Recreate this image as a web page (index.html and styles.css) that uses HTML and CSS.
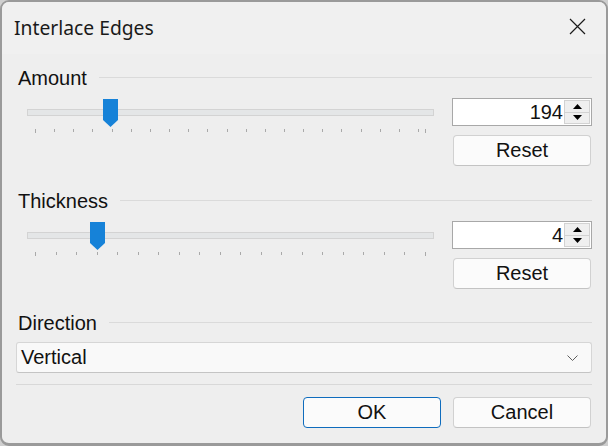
FILE: index.html
```html
<!DOCTYPE html>
<html>
<head>
<meta charset="utf-8">
<link rel="stylesheet" href="styles.css">
</head>
<body>
<div class="window">
  <div class="titlebar">
    <span class="title">Interlace Edges</span>
    <span class="close">
      <svg width="17" height="17" viewBox="0 0 17 17"><path d="M1 1 L16 16 M16 1 L1 16" stroke="#1b1b1b" stroke-width="1.2" fill="none"/></svg>
    </span>
  </div>
  <div class="content">
    <section class="group first">
      <div class="group-head"><span class="label">Amount</span><span class="rule"></span></div>
      <div class="control-row">
        <div class="slider">
          <div class="track"></div>
          <div class="ticks">
            <i class="tick long" style="left:19px"></i><i class="tick" style="left:38.15px"></i><i class="tick" style="left:57.3px"></i><i class="tick" style="left:76.45px"></i><i class="tick" style="left:95.6px"></i><i class="tick" style="left:114.75px"></i><i class="tick" style="left:133.9px"></i><i class="tick" style="left:153.05px"></i><i class="tick" style="left:172.2px"></i><i class="tick" style="left:191.35px"></i><i class="tick" style="left:210.5px"></i><i class="tick" style="left:229.65px"></i><i class="tick" style="left:248.8px"></i><i class="tick" style="left:267.95px"></i><i class="tick" style="left:287.1px"></i><i class="tick" style="left:306.25px"></i><i class="tick" style="left:325.4px"></i><i class="tick" style="left:344.55px"></i><i class="tick" style="left:363.7px"></i><i class="tick" style="left:382.85px"></i><i class="tick" style="left:402px"></i><i class="tick long" style="left:409px"></i>
          </div>
          <svg class="thumb" style="left:87px" width="15" height="28" viewBox="0 0 15 28"><polygon points="0,0 15,0 15,21 7.5,28 0,21" fill="#1682d8"/></svg>
        </div>
        <div class="side">
          <div class="spin">
            <span class="value">194</span>
            <div class="spin-btns">
              <span class="sbtn"><svg width="9" height="5" viewBox="0 0 9 5"><polygon points="0,5 9,5 4.5,0" fill="#000"/></svg></span>
              <span class="sbtn"><svg width="9" height="5" viewBox="0 0 9 5"><polygon points="0,0 9,0 4.5,5" fill="#000"/></svg></span>
            </div>
          </div>
          <button class="btn">Reset</button>
        </div>
      </div>
    </section>

    <section class="group second">
      <div class="group-head"><span class="label">Thickness</span><span class="rule"></span></div>
      <div class="control-row">
        <div class="slider">
          <div class="track"></div>
          <div class="ticks">
            <i class="tick long" style="left:19px"></i><i class="tick" style="left:39.53px"></i><i class="tick" style="left:60.05px"></i><i class="tick" style="left:80.58px"></i><i class="tick" style="left:101.1px"></i><i class="tick" style="left:121.63px"></i><i class="tick" style="left:142.16px"></i><i class="tick" style="left:162.68px"></i><i class="tick" style="left:183.21px"></i><i class="tick" style="left:203.74px"></i><i class="tick" style="left:224.26px"></i><i class="tick" style="left:244.79px"></i><i class="tick" style="left:265.32px"></i><i class="tick" style="left:285.84px"></i><i class="tick" style="left:306.37px"></i><i class="tick" style="left:326.9px"></i><i class="tick" style="left:347.42px"></i><i class="tick" style="left:367.95px"></i><i class="tick" style="left:388.47px"></i><i class="tick long" style="left:409px"></i>
          </div>
          <svg class="thumb" style="left:74px" width="15" height="28" viewBox="0 0 15 28"><polygon points="0,0 15,0 15,21 7.5,28 0,21" fill="#1682d8"/></svg>
        </div>
        <div class="side">
          <div class="spin">
            <span class="value">4</span>
            <div class="spin-btns">
              <span class="sbtn"><svg width="9" height="5" viewBox="0 0 9 5"><polygon points="0,5 9,5 4.5,0" fill="#000"/></svg></span>
              <span class="sbtn"><svg width="9" height="5" viewBox="0 0 9 5"><polygon points="0,0 9,0 4.5,5" fill="#000"/></svg></span>
            </div>
          </div>
          <button class="btn">Reset</button>
        </div>
      </div>
    </section>

    <section class="group third">
      <div class="group-head"><span class="label">Direction</span><span class="rule"></span></div>
      <div class="select">
        <span>Vertical</span>
        <svg width="11" height="6" viewBox="0 0 11 6"><path d="M0.5 0.5 L5.5 5.5 L10.5 0.5" stroke="#5f5f5f" stroke-width="1" fill="none"/></svg>
      </div>
    </section>

    <div class="separator"></div>

    <div class="footer">
      <button class="btn primary">OK</button>
      <button class="btn">Cancel</button>
    </div>
  </div>
</div>
</body>
</html>
```

FILE: styles.css
```css
html, body {
  margin: 0;
  padding: 0;
  background: #cfcfcf;
}

.window {
  width: 608px;
  height: 446px;
  box-sizing: border-box;
  border: 2px solid #9a9a9a;
  border-bottom-width: 3px;
  border-radius: 9px;
  background: #eeeeee;
  overflow: hidden;
  display: flex;
  flex-direction: column;
  font-family: "Liberation Sans", Arial, sans-serif;
  font-size: 20px;
  color: #111;
}

.titlebar {
  height: 52px;
  flex: none;
  display: flex;
  align-items: center;
  justify-content: space-between;
  padding: 0 20px 0 12px;
  background: #f0f0f0;
}

.title {
  font-family: "Noto Sans", "Open Sans", sans-serif;
  font-size: 19.3px;
  color: #1a1a1a;
  margin-top: -2px;
}

.close {
  display: flex;
  margin-top: -3px;
}

.content {
  padding: 0 14px;
  display: flex;
  flex-direction: column;
}

.group.first {
  margin-top: 13px;
}

.group.second {
  margin-top: 24px;
}

.group.third {
  margin-top: 23px;
}

.group-head {
  height: 22px;
  display: flex;
  align-items: center;
  line-height: 22px;
}

.label {
  padding-left: 2px;
}

.rule {
  flex: 1;
  height: 1px;
  background: #dadada;
  margin-left: 12px;
  margin-bottom: 2px;
}

.control-row {
  margin-top: 9px;
  display: grid;
  grid-template-columns: 1fr 140px;
  column-gap: 18px;
}

.slider {
  position: relative;
  height: 68px;
}

.track {
  margin: 11px 0 0 11px;
  height: 7px;
  box-sizing: border-box;
  border: 1px solid #d3d3d3;
  background: #e4e6e7;
}

.ticks {
  position: absolute;
  left: 0;
  top: 31px;
  width: 100%;
  height: 4px;
}

.tick {
  position: absolute;
  top: 0;
  width: 1px;
  height: 3px;
  background: #a9a9a9;
}

.tick.long {
  height: 4px;
}

.thumb {
  position: absolute;
  top: 1px;
  display: block;
}

.side {
  display: flex;
  flex-direction: column;
  gap: 9px;
}

.spin {
  height: 28px;
  box-sizing: border-box;
  border: 1px solid #a8a8a8;
  background: #ffffff;
  display: flex;
  align-items: center;
  justify-content: flex-end;
  padding: 1px;
}

.value {
  padding-right: 1px;
  line-height: 24px;
}

.spin-btns {
  width: 26px;
  height: 100%;
  display: flex;
  flex-direction: column;
}

.sbtn {
  flex: 1;
  display: flex;
  align-items: center;
  justify-content: center;
  background: #efefef;
  border: 1px solid #d2d2d2;
  box-sizing: border-box;
}

.sbtn + .sbtn {
  border-top: none;
}

.btn {
  height: 31px;
  margin: 0 1px;
  box-sizing: border-box;
  border: 1px solid #d1d1d1;
  border-bottom-color: #c3c3c3;
  border-radius: 4px;
  background: #fbfbfb;
  font-family: "Liberation Sans", Arial, sans-serif;
  font-size: 20px;
  color: #111;
  padding: 0;
}

.select {
  margin-top: 8px;
  height: 31px;
  box-sizing: border-box;
  border: 1px solid #d6d6d6;
  border-bottom-color: #c4c4c4;
  border-radius: 3px;
  background: #f9f9f9;
  display: flex;
  align-items: center;
  justify-content: space-between;
  padding: 0 13px 0 4px;
}

.separator {
  margin-top: 11px;
  height: 1px;
  background: #d8d8d8;
}

.footer {
  margin-top: 12px;
  display: flex;
  justify-content: flex-end;
  gap: 12px;
}

.footer .btn {
  width: 138px;
  margin: 0;
}

.footer .btn:last-child {
  margin-right: 1px;
}

.btn.primary {
  border-color: #0f6cbd;
}
```
